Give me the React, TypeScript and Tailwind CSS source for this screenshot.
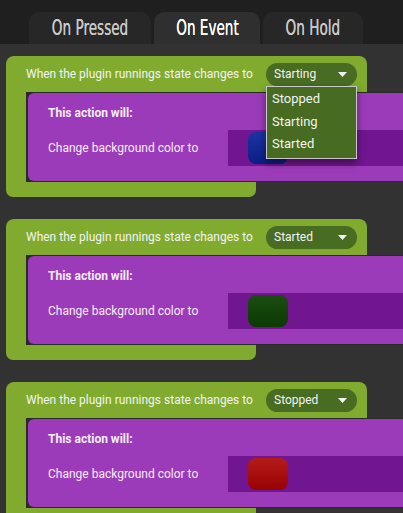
import React from "react";

type Card = {
  value: string;
  swatch: string;
  open?: boolean;
};

const cards: Card[] = [
  { value: "Starting", swatch: "bg-gradient-to-b from-[#1c34a3] to-[#0b1d85]", open: true },
  { value: "Started", swatch: "bg-gradient-to-b from-[#1b4d12] to-[#0b3a03]" },
  { value: "Stopped", swatch: "bg-gradient-to-b from-[#b41a1a] to-[#980202]" },
];

const tabs = [
  { label: "On Pressed", w: "w-[122px]", active: false },
  { label: "On Event", w: "w-[106px]", active: true },
  { label: "On Hold", w: "w-[100px]", active: false },
];

function Caret() {
  return (
    <svg width="9" height="5" viewBox="0 0 9 5" className="shrink-0">
      <path d="M0 0h9L4.5 5z" fill="#f4f4f4" />
    </svg>
  );
}

function StateCard({ card }: { card: Card }) {
  return (
    <div className="relative">
      <div className="flex h-[36px] w-[361px] items-center justify-between rounded-t-[8px] bg-[#80ab2f] pl-5 pr-[10px]">
        <span className="text-[12px] text-[#f3f3f3]">When the plugin runnings state changes to</span>
        <div className="relative">
          <div className="flex h-[23px] w-[91px] items-center justify-between rounded-full bg-[#476c22] pl-2 pr-[10px] text-[12px] text-[#f3f3f3]">
            <span>{card.value}</span>
            <Caret />
          </div>
          {card.open && (
            <div className="absolute left-0 top-[23px] z-10 w-[91px] border border-[#c9c9c9] bg-[#466b21] pb-[3px] pt-[1px] text-[13px] text-[#f3f3f3] shadow-[0_4px_8px_rgba(0,0,0,0.45)]">
              {["Stopped", "Starting", "Started"].map((o) => (
                <div key={o} className="flex h-[22.5px] items-center pl-[5px]">
                  {o}
                </div>
              ))}
            </div>
          )}
        </div>
      </div>
      <div className="w-[250px] rounded-b-[7px] bg-[#80ab2f] pb-[15px] pl-5">
        <div className="w-[400px] bg-[#2a2a2a] py-[1px] pl-[2px]">
          <div className="h-[88px] rounded-l-[6px] bg-[#9c3bba] pl-5 pt-[12px] text-[12px] text-[#f3eef6]">
            <div className="h-[16px] font-bold leading-[16px]">This action will:</div>
            <div className="mt-[9px] flex items-center">
              <span className="w-[180px]">Change background color to</span>
              <div className="h-[36px] flex-1 bg-[#711690] py-[2px] pl-5">
                <div className={`h-[32px] w-[40px] rounded-[8px] ${card.swatch}`} />
              </div>
            </div>
          </div>
        </div>
      </div>
    </div>
  );
}

export default function App() {
  return (
    <div className="h-[513px] w-[403px] overflow-hidden bg-[#323232] font-['Roboto',sans-serif]">
      <div className="flex h-[44px] items-end gap-[3px] bg-[#1f1f1f] pl-[29px]">
        {tabs.map((t) => (
          <div
            key={t.label}
            className={`flex h-[32px] items-center justify-center rounded-t-[10px] ${t.w} ${
              t.active ? "bg-[#2f2f2f] text-white" : "bg-[#272727] text-[#c9c9c9]"
            }`}
          >
            <span className="inline-block scale-x-[0.72] whitespace-nowrap font-['DejaVu_Sans_Condensed','DejaVu_Sans',sans-serif] text-[21px] leading-none [text-shadow:0_0_0.5px_currentColor]">
              {t.label}
            </span>
          </div>
        ))}
      </div>
      <div className="flex flex-col gap-[22px] pl-[6px] pt-[12px]">
        {cards.map((c) => (
          <StateCard key={c.value} card={c} />
        ))}
      </div>
    </div>
  );
}
